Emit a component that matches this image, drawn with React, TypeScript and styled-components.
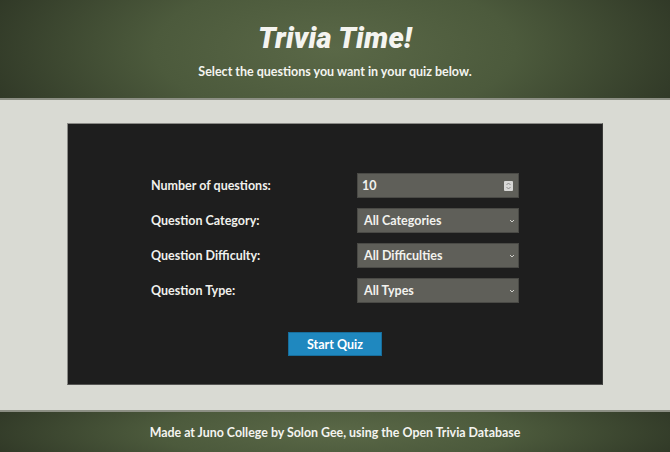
import React from "react";
import styled, { createGlobalStyle } from "styled-components";

const Global = createGlobalStyle`
  html, body { margin: 0; padding: 0; }
  body { font-family: "Lato", "Noto Sans", sans-serif; background: #d9dad3; }
  * { box-sizing: border-box; }
`;

const Page = styled.div`
  width: 670px;
  height: 452px;
  display: flex;
  flex-direction: column;
  background: #d9dad3;
`;

const Band = styled.div`
  background: radial-gradient(ellipse 60% 160% at 50% 50%, #5a6847 0%, #4c5a3c 45%, #2a3122 100%);
  color: #f4f4f0;
  text-align: center;
`;

const Header = styled(Band)`
  height: 100px;
  border-bottom: 2px solid #8c8f84;
  padding-top: 20px;
`;

const Title = styled.h1`
  margin: 0;
  font-family: "Roboto", sans-serif;
  font-style: italic;
  font-weight: 900;
  font-size: 29px;
  line-height: 36px;
  letter-spacing: 0.2px;
`;

const Subtitle = styled.p`
  margin: 8px 0 0;
  font-size: 12.5px;
  font-weight: 700;
  line-height: 16px;
`;

const Main = styled.main`
  flex: 1;
  padding: 23px 67px 0;
`;

const Card = styled.section`
  height: 262px;
  background: #1e1e1e;
  border: 1px solid #8a8a86;
  border-right-color: #3a3a38;
  border-bottom-color: #555553;
  padding-top: 49px;
  display: flex;
  flex-direction: column;
  align-items: center;
`;

const Form = styled.div`
  display: grid;
  grid-template-columns: 206px 162px;
  row-gap: 10px;
  align-items: center;
`;

const Label = styled.label`
  color: #f0f0ec;
  font-size: 12.5px;
  font-weight: 700;
`;

const Field = styled.div<{ $pad: number }>`
  position: relative;
  height: 25px;
  background: #5f5f59;
  border: 1px solid #4a4a46;
  color: #f2f2ee;
  font-size: 12.5px;
  font-weight: 700;
  display: flex;
  align-items: center;
  padding-left: ${(p) => p.$pad}px;
`;

const Spinner = styled.span`
  position: absolute;
  right: 5px;
  top: 7px;
  width: 9px;
  height: 10px;
  background: #d8d8d6;
  border-radius: 1px;
  display: flex;
  align-items: center;
  justify-content: center;
`;

const Chevron = styled.svg`
  position: absolute;
  right: 3px;
  top: 10px;
`;

const Button = styled.button`
  margin-top: 29px;
  width: 94px;
  height: 24px;
  background: #1f88bf;
  border: 1px solid #176e9c;
  color: #fff;
  font-family: inherit;
  font-size: 12.5px;
  font-weight: 700;
  padding: 0;
`;

const Footer = styled(Band)`
  height: 42px;
  border-top: 2px solid #8c8f84;
  display: flex;
  align-items: center;
  justify-content: center;
  font-size: 12.4px;
  font-weight: 700;
`;

const selects = [
  { label: "Question Category:", value: "All Categories" },
  { label: "Question Difficulty:", value: "All Difficulties" },
  { label: "Question Type:", value: "All Types" },
];

export default function App() {
  return (
    <>
      <Global />
      <Page>
        <Header>
          <Title>Trivia Time!</Title>
          <Subtitle>Select the questions you want in your quiz below.</Subtitle>
        </Header>
        <Main>
          <Card>
            <Form>
              <Label>Number of questions:</Label>
              <Field $pad={4}>
                10
                <Spinner>
                  <svg width="5" height="8" viewBox="0 0 5 8">
                    <path d="M0.5 3 L2.5 1 L4.5 3 M0.5 5 L2.5 7 L4.5 5" fill="none" stroke="#777" strokeWidth="0.8" />
                  </svg>
                </Spinner>
              </Field>
              {selects.map((s) => (
                <React.Fragment key={s.label}>
                  <Label>{s.label}</Label>
                  <Field $pad={6}>
                    {s.value}
                    <Chevron width="6" height="4" viewBox="0 0 6 4">
                      <path d="M1 1 L3 3 L5 1" fill="none" stroke="#cfcfca" strokeWidth="1" />
                    </Chevron>
                  </Field>
                </React.Fragment>
              ))}
            </Form>
            <Button>Start Quiz</Button>
          </Card>
        </Main>
        <Footer>Made at Juno College by Solon Gee, using the Open Trivia Database</Footer>
      </Page>
    </>
  );
}
